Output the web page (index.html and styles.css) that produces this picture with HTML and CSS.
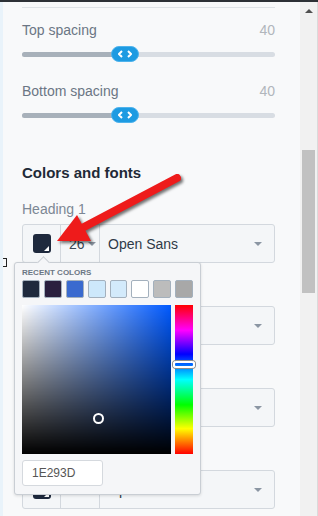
FILE: index.html
```html
<!DOCTYPE html>
<html lang="en">
<head>
    <meta charset="UTF-8">
    <meta name="viewport" content="width=device-width, initial-scale=1.0">
    <title>Theme settings</title>
    <link rel="stylesheet" href="styles.css">
</head>
<body>
    <div class="window">
        <div class="edge"></div>

        <div class="panel">
            <div class="rule"></div>

            <div class="setting">
                <div class="setting-head">
                    <span>Top spacing</span>
                    <span class="value">40</span>
                </div>
                <div class="slider">
                    <div class="track"><div class="fill"></div></div>
                    <div class="thumb">
                        <svg width="14" height="8" viewBox="0 0 14 8"><path d="M4 1 1 4l3 3M10 1l3 3-3 3" fill="none" stroke="#fff" stroke-width="2"/></svg>
                    </div>
                </div>
            </div>

            <div class="setting">
                <div class="setting-head">
                    <span>Bottom spacing</span>
                    <span class="value">40</span>
                </div>
                <div class="slider">
                    <div class="track"><div class="fill"></div></div>
                    <div class="thumb">
                        <svg width="14" height="8" viewBox="0 0 14 8"><path d="M4 1 1 4l3 3M10 1l3 3-3 3" fill="none" stroke="#fff" stroke-width="2"/></svg>
                    </div>
                </div>
            </div>

            <h2>Colors and fonts</h2>

            <div class="font-field first">
                <div class="field-label">Heading 1</div>
                <div class="font-row">
                    <div class="cell swatch-cell"><span class="swatch"></span></div>
                    <div class="cell size-cell">26<span class="caret"></span></div>
                    <div class="cell family-cell">Open Sans<span class="caret"></span></div>
                </div>
            </div>

            <div class="font-field">
                <div class="field-label">Heading 2</div>
                <div class="font-row">
                    <div class="cell swatch-cell"><span class="swatch"></span></div>
                    <div class="cell size-cell">20<span class="caret"></span></div>
                    <div class="cell family-cell">Open Sans<span class="caret"></span></div>
                </div>
            </div>

            <div class="font-field">
                <div class="field-label">Heading 3</div>
                <div class="font-row">
                    <div class="cell swatch-cell"><span class="swatch"></span></div>
                    <div class="cell size-cell">16<span class="caret"></span></div>
                    <div class="cell family-cell">Open Sans<span class="caret"></span></div>
                </div>
            </div>

            <div class="font-field">
                <div class="field-label">Paragraph</div>
                <div class="font-row">
                    <div class="cell swatch-cell"><span class="swatch"></span></div>
                    <div class="cell size-cell">14<span class="caret"></span></div>
                    <div class="cell family-cell">Open Sans<span class="caret"></span></div>
                </div>
            </div>
        </div>

        <div class="scrollbar">
            <span class="scroll-up"></span>
            <div class="scroll-thumb"></div>
        </div>

        <span class="bracket"></span>

        <!-- color picker popover for Heading 1 -->
        <div class="picker">
            <div class="picker-title">RECENT COLORS</div>
            <div class="recent">
                <span class="chip" style="background:#1e293d"></span>
                <span class="chip" style="background:#2a1f3e"></span>
                <span class="chip" style="background:#3a6acf"></span>
                <span class="chip" style="background:#cde8fb"></span>
                <span class="chip" style="background:#d3eafb"></span>
                <span class="chip" style="background:#ffffff"></span>
                <span class="chip" style="background:#bcbcbc"></span>
                <span class="chip" style="background:#a8a8a8"></span>
            </div>
            <div class="picker-body">
                <div class="saturation"><span class="sat-handle"></span></div>
                <div class="hue"><span class="hue-handle"></span></div>
            </div>
            <div class="hex">1E293D</div>
        </div>

        <svg class="callout" width="318" height="516" viewBox="0 0 318 516">
            <line x1="177" y1="178" x2="84" y2="227" stroke="#ee1b1b" stroke-width="8" stroke-linecap="round"/>
            <polygon points="57,241 77,215 91,241" fill="#ee1b1b"/>
        </svg>
    </div>
</body>
</html>
```

FILE: styles.css
```css
:root {
    --panel-bg: #f8f9fa;
    --text-dark: #1f2a37;
    --text-label: #6b7684;
    --text-muted: #b1b6bc;
    --border: #d3d8de;
    --accent: #1d9be2;
}

* {
    margin: 0;
    padding: 0;
    box-sizing: border-box;
}

body {
    font-family: 'Liberation Sans', Arial, sans-serif;
    background: var(--panel-bg);
    overflow: hidden;
}

.window {
    position: relative;
    display: flex;
    width: 318px;
    height: 516px;
    border-top: 2px solid #2d3136;
}

.edge {
    width: 3px;
    background: #e9f3fa;
}

.panel {
    width: 297px;
    padding: 0 25px 0 19px;
    background: var(--panel-bg);
}

.rule {
    height: 1px;
    margin-top: 5px;
    background: #dfe3e7;
}

.setting {
    margin-top: 14px;
}

.setting + .setting {
    margin-top: 21px;
}

.setting-head {
    display: flex;
    justify-content: space-between;
    font-size: 14px;
    line-height: 16px;
    color: var(--text-label);
}

.value {
    color: var(--text-muted);
}

.slider {
    position: relative;
    height: 16px;
    margin-top: 8px;
    display: flex;
    align-items: center;
}

.track {
    width: 100%;
    height: 5px;
    border-radius: 3px;
    background: #d8dde3;
    overflow: hidden;
}

.fill {
    width: 90px;
    height: 100%;
    background: #a8b1ba;
}

.thumb {
    position: absolute;
    left: 89px;
    top: 0;
    width: 28px;
    height: 16px;
    border-radius: 8px;
    background: var(--accent);
    border: 1px solid #4fb3ec;
    display: flex;
    align-items: center;
    justify-content: center;
}

h2 {
    margin-top: 41px;
    font-size: 15px;
    line-height: 18px;
    font-weight: bold;
    color: var(--text-dark);
}

.font-field {
    margin-top: 20px;
}

.font-field.first {
    margin-top: 19px;
}

.field-label {
    font-size: 14px;
    line-height: 16px;
    color: #7c8794;
}

.font-row {
    display: flex;
    height: 39px;
    margin-top: 7px;
    border: 1px solid var(--border);
    border-radius: 3px;
    background: #f4f6f8;
    font-size: 14px;
    color: #2e3a48;
}

.cell {
    display: flex;
    align-items: center;
    border-right: 1px solid var(--border);
}

.swatch-cell {
    width: 38px;
    justify-content: center;
    padding-left: 1px;
}

.swatch {
    position: relative;
    width: 18px;
    height: 19px;
    border-radius: 3px;
    background: #1e293d;
    overflow: hidden;
}

.swatch::after {
    content: '';
    position: absolute;
    right: 2px;
    bottom: 2px;
    border-left: 5px solid transparent;
    border-bottom: 5px solid #fff;
}

.size-cell {
    width: 39px;
    padding-left: 8px;
    gap: 3px;
    color: #3b4654;
}

.family-cell {
    flex: 1;
    border-right: none;
    padding: 0 12px 0 8px;
    justify-content: space-between;
}

.caret {
    width: 0;
    height: 0;
    border-left: 4px solid transparent;
    border-right: 4px solid transparent;
    border-top: 4px solid #8b96a3;
}

.scrollbar {
    position: relative;
    width: 18px;
    background: #f1f1f1;
    border-right: 1px solid #dadada;
}

.scroll-up {
    position: absolute;
    left: 5px;
    top: 7px;
    border-left: 4px solid transparent;
    border-right: 4px solid transparent;
    border-bottom: 4px solid #505050;
}

.scroll-thumb {
    width: 13px;
    height: 143px;
    margin: 148px 0 0 2px;
    background: #c1c1c1;
}

.bracket {
    position: absolute;
    left: 3px;
    top: 256px;
    width: 4px;
    height: 9px;
    border: 1px solid #222;
    border-left: none;
}

/* popover */

.picker {
    position: absolute;
    left: 14px;
    top: 260px;
    width: 187px;
    height: 233px;
    padding: 5px 7px 7px;
    background: #f5f6f8;
    border: 1px solid #c9ced4;
    border-radius: 3px;
    box-shadow: 0 1px 3px rgba(0, 0, 0, 0.12);
}

.picker::before {
    content: '';
    position: absolute;
    left: 24px;
    top: -5px;
    width: 8px;
    height: 8px;
    background: #f5f6f8;
    border-left: 1px solid #c9ced4;
    border-top: 1px solid #c9ced4;
    transform: rotate(45deg);
}

.picker-title {
    font-size: 8px;
    line-height: 10px;
    font-weight: bold;
    color: #6b7684;
}

.recent {
    display: flex;
    gap: 4px;
    margin-top: 2px;
}

.chip {
    width: 18px;
    height: 18px;
    border-radius: 2px;
    border: 1px solid #a3b0bd;
}

.picker-body {
    display: flex;
    gap: 4px;
    margin-top: 7px;
}

.saturation {
    position: relative;
    width: 150px;
    height: 149px;
    background:
        linear-gradient(to top, #000, rgba(0, 0, 0, 0)),
        linear-gradient(to right, #fff, hsl(219, 100%, 50%));
}

.sat-handle {
    position: absolute;
    left: 71px;
    top: 108px;
    width: 11px;
    height: 11px;
    border: 2px solid #fff;
    border-radius: 50%;
}

.hue {
    position: relative;
    width: 18px;
    height: 149px;
    background: linear-gradient(to bottom, #f00, #f0f 17%, #00f 33%, #0ff 50%, #0f0 67%, #ff0 83%, #f00);
}

.hue-handle {
    position: absolute;
    left: -2px;
    top: 56px;
    width: 22px;
    height: 7px;
    border: 2px solid #fff;
    border-radius: 3px;
    box-shadow: 0 0 0 1px #8c8c8c;
}

.hex {
    width: 81px;
    height: 26px;
    margin-top: 6px;
    padding-left: 9px;
    background: #fff;
    border: 1px solid #d5d9de;
    border-radius: 3px;
    font-size: 12px;
    line-height: 24px;
    color: #555;
}

.callout {
    position: absolute;
    left: 0;
    top: -2px;
    pointer-events: none;
    filter: drop-shadow(2px 2px 1.5px rgba(0, 0, 0, 0.55));
}
```
